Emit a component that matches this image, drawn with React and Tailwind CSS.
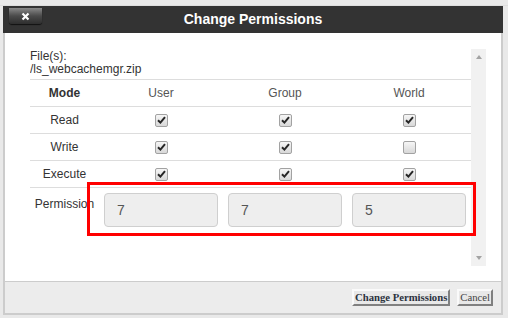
import { useState } from "react";

const modes = [
  { label: "Read", perms: [true, true, true] },
  { label: "Write", perms: [true, true, false] },
  { label: "Execute", perms: [true, true, true] },
];

const Check = ({ checked }) => (
  <span className="w-[13px] h-[13px] rounded-[2px] border border-[#a2a2a2] bg-linear-to-b from-[#f6f6f6] to-[#d8d8d8] flex items-center justify-center">
    {checked && (
      <svg width="9" height="8" viewBox="0 0 9 8">
        <path d="M1 4.3 L3.4 6.6 L8 1.2" stroke="#262626" strokeWidth="2" fill="none" />
      </svg>
    )}
  </span>
);

const App = () => {
  const [values] = useState(["7", "7", "5"]);

  return (
    <div className="relative w-[508px] h-[318px] overflow-hidden bg-[#e9e9e9] font-['Liberation_Sans',Arial,sans-serif]">
      <div className="h-[6px] border-b border-[#dedede]" />

      {/* dialog */}
      <div className="ml-[3px] w-[500px] flex flex-col">
        <div className="relative h-[27px] bg-[#333333] flex items-center justify-center">
          <button className="absolute left-[6px] top-[2px] w-[33px] h-[16px] rounded-b-[3px] bg-linear-to-b from-[#8a8a8a] via-[#4a4a4a] to-[#2e2e2e] shadow-[0_1px_1px_#111] flex items-center justify-center">
            <svg width="9" height="9" viewBox="0 0 9 9">
              <path d="M1.5 1.5 L7.5 7.5 M7.5 1.5 L1.5 7.5" stroke="#fff" strokeWidth="2.2" />
            </svg>
          </button>
          <span className="text-[14px] font-bold text-white">Change Permissions</span>
        </div>

        <div className="bg-white border-x-2 border-[#cccccc] pt-[16px] pl-[25px] pr-[14px] pb-[15px]">
          <div className="flex h-[217px]">
            <div className="w-[441px] overflow-hidden text-[12px] text-[#333]">
              <div className="leading-[13px] pt-[1px]">
                <div>File(s):</div>
                <div>/ls_webcachemgr.zip</div>
              </div>

              <div className="mt-[3px]">
                <div className="grid grid-cols-[69px_124px_124px_124px] h-[27px] border-t border-[#dddddd] items-center text-center">
                  <div className="font-bold">Mode</div>
                  <div className="text-[#555]">User</div>
                  <div className="text-[#555]">Group</div>
                  <div className="text-[#555]">World</div>
                </div>
                {modes.map((m) => (
                  <div
                    key={m.label}
                    className="grid grid-cols-[69px_124px_124px_124px] h-[27px] border-t border-[#dddddd] items-center text-center"
                  >
                    <div>{m.label}</div>
                    {m.perms.map((p, i) => (
                      <div key={i} className="flex justify-center">
                        <Check checked={p} />
                      </div>
                    ))}
                  </div>
                ))}
                <div className="grid grid-cols-[69px_124px_124px_124px] border-t border-[#dddddd] pt-[5px]">
                  <div className="text-center pt-[2px]">Permission</div>
                  {values.map((v, i) => (
                    <div key={i} className="px-[5px]">
                      <div className="h-[34px] rounded-[4px] border border-[#cfcfcf] bg-[#eeeeee] flex items-center pl-[12px] text-[14px] text-[#555]">
                        {v}
                      </div>
                    </div>
                  ))}
                </div>
              </div>
            </div>

            {/* scrollbar */}
            <div className="w-[15px] bg-[#f1f1f1] flex flex-col justify-between items-center py-[6px]">
              <span className="w-0 h-0 border-x-[3.5px] border-x-transparent border-b-[4px] border-b-[#a3a3a3]" />
              <span className="w-0 h-0 border-x-[3.5px] border-x-transparent border-t-[4px] border-t-[#a3a3a3]" />
            </div>
          </div>
        </div>

        <div className="h-[34px] bg-[#ececec] border-x-2 border-b-2 border-t border-[#cccccc] flex items-center justify-end gap-[7px] pr-[8px] font-['Liberation_Serif','Times_New_Roman',serif] text-[10.7px]">
          <button className="h-[17px] px-[1px] bg-[#e8e8e8] border-2 border-t-[#fafafa] border-l-[#fafafa] border-r-[#808080] border-b-[#808080] font-bold text-[#2c3340] leading-none">
            Change Permissions
          </button>
          <button className="h-[17px] px-[1px] bg-[#e8e8e8] border-2 border-t-[#fafafa] border-l-[#fafafa] border-r-[#808080] border-b-[#808080] text-[#444] leading-none">
            Cancel
          </button>
        </div>
      </div>

      {/* highlight */}
      <div className="absolute left-[87px] top-[182px] w-[389px] h-[54px] border-[3px] border-[#ff0000]" />
    </div>
  );
};

export default App;
